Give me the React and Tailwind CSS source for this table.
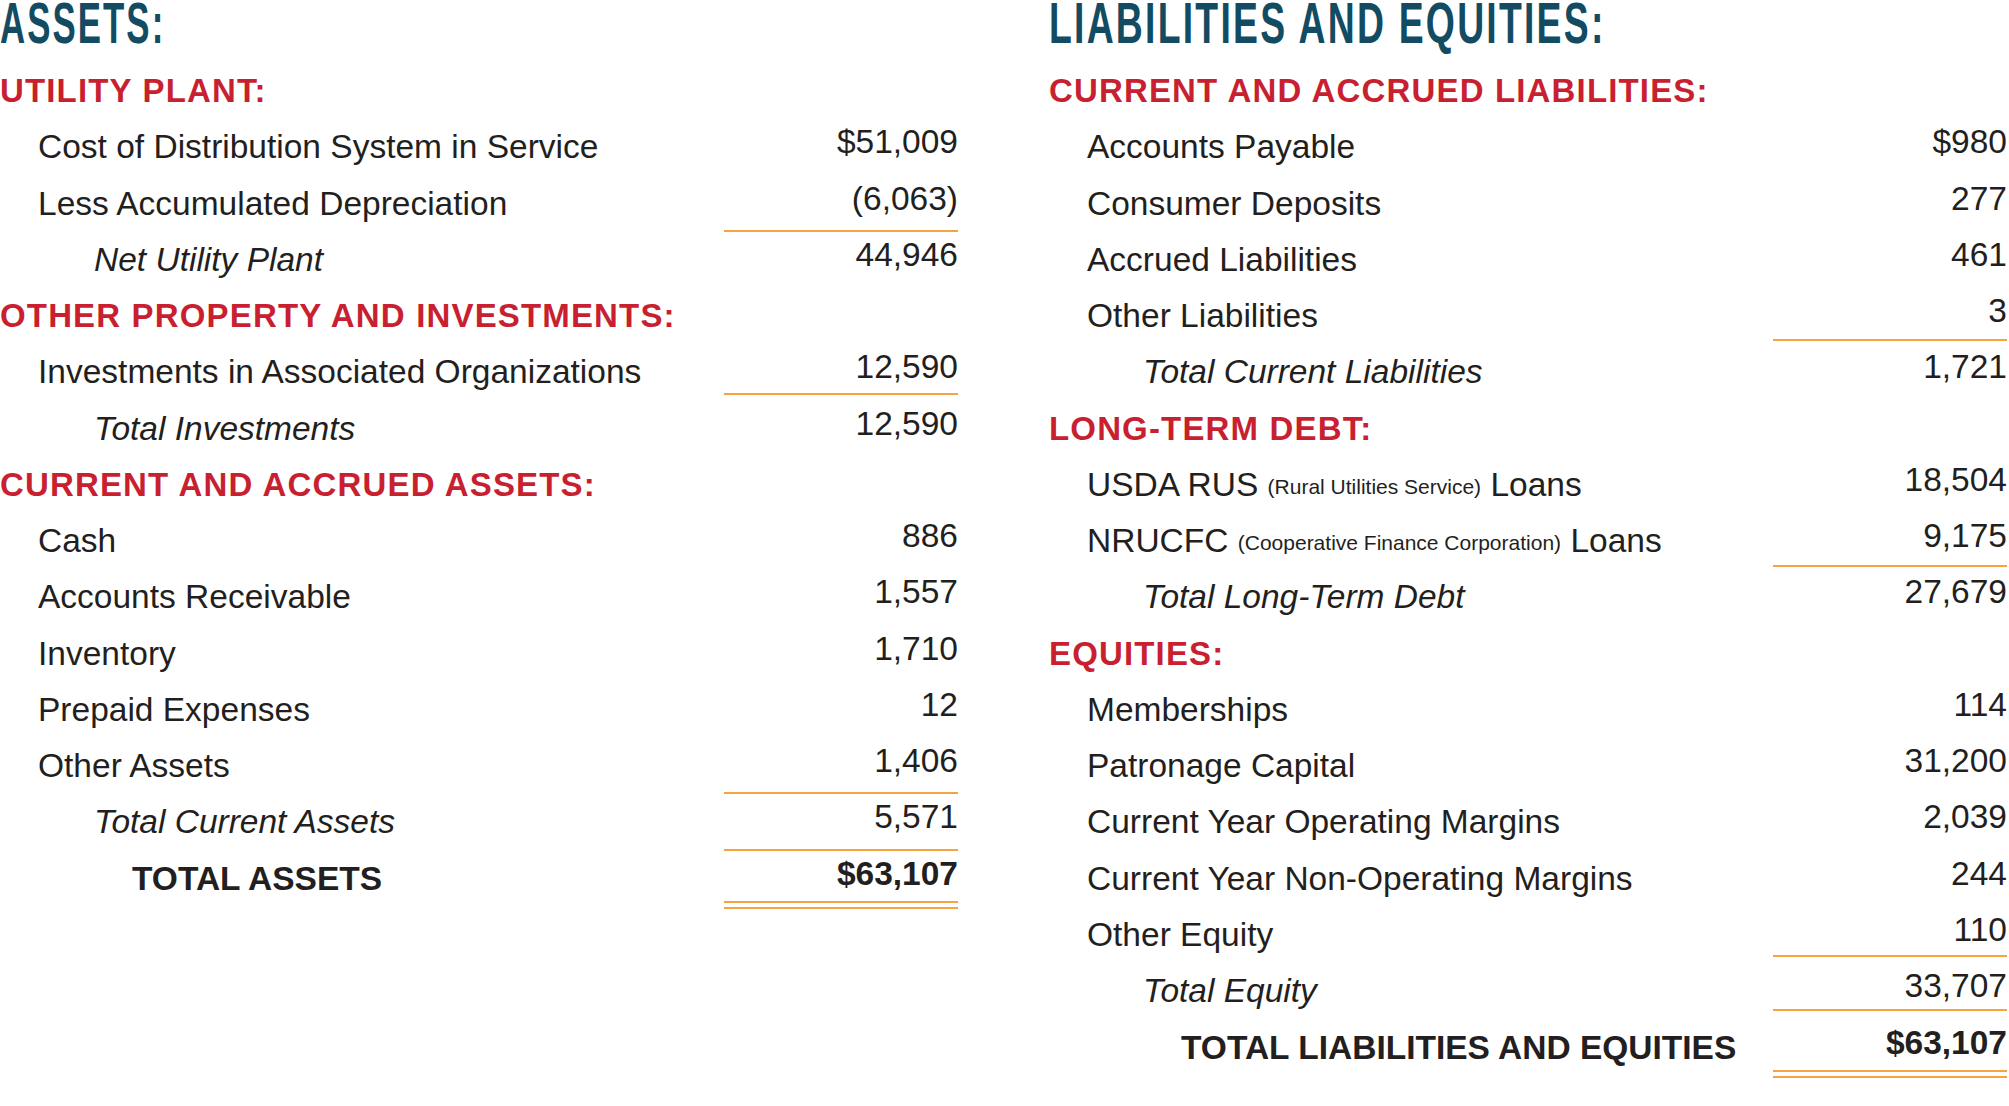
import React from "react";

const LEFT = [
  { t: "h", text: "UTILITY PLANT:" },
  { label: "Cost of Distribution System in Service", value: "$51,009" },
  { label: "Less Accumulated Depreciation", value: "(6,063)", line: "h-[56.27px] border-b-2" },
  { label: "Net Utility Plant", value: "44,946", k: "sub" },
  { t: "h", text: "OTHER PROPERTY AND INVESTMENTS:" },
  { label: "Investments in Associated Organizations", value: "12,590", line: "h-[51px] border-b-2" },
  { label: "Total Investments", value: "12,590", k: "sub" },
  { t: "h", text: "CURRENT AND ACCRUED ASSETS:" },
  { label: "Cash", value: "886" },
  { label: "Accounts Receivable", value: "1,557" },
  { label: "Inventory", value: "1,710" },
  { label: "Prepaid Expenses", value: "12" },
  { label: "Other Assets", value: "1,406", line: "h-[56.27px] border-b-2" },
  { label: "Total Current Assets", value: "5,571", k: "sub", line: "h-[56.27px] border-b-2" },
  { label: "TOTAL ASSETS", value: "$63,107", k: "total", dbl: true },
];

const RIGHT = [
  { t: "h", text: "CURRENT AND ACCRUED LIABILITIES:" },
  { label: "Accounts Payable", value: "$980" },
  { label: "Consumer Deposits", value: "277" },
  { label: "Accrued Liabilities", value: "461" },
  { label: "Other Liabilities", value: "3", line: "h-[53px] border-b-2" },
  { label: "Total Current Liabilities", value: "1,721", k: "sub" },
  { t: "h", text: "LONG-TERM DEBT:" },
  { label: "USDA RUS", small: "(Rural Utilities Service)", after: "Loans", value: "18,504" },
  { label: "NRUCFC", small: "(Cooperative Finance Corporation)", after: "Loans", value: "9,175", line: "h-[54px] border-b-2" },
  { label: "Total Long-Term Debt", value: "27,679", k: "sub" },
  { t: "h", text: "EQUITIES:" },
  { label: "Memberships", value: "114" },
  { label: "Patronage Capital", value: "31,200" },
  { label: "Current Year Operating Margins", value: "2,039" },
  { label: "Current Year Non-Operating Margins", value: "244" },
  { label: "Other Equity", value: "110", line: "h-[50px] border-b-2" },
  { label: "Total Equity", value: "33,707", k: "sub", line: "h-[48px] border-b-2" },
  { label: "TOTAL LIABILITIES AND EQUITIES", value: "$63,107", k: "total", dbl: true },
];

function Row({ r }) {
  if (r.t === "h") {
    return (
      <div className="h-[56.27px] text-[33px] leading-[56.27px] font-bold tracking-[0.035em] text-[#c81f31] whitespace-nowrap">
        {r.text}
      </div>
    );
  }
  let labelCls = "pl-[38px]";
  if (r.k === "sub") labelCls = "pl-[94px] italic";
  if (r.k === "total") labelCls = "pl-[132px] font-bold";
  const valCls = r.k === "total" ? "font-bold" : "";
  return (
    <div className="flex h-[56.27px] items-start">
      <div className={`flex-1 text-[33.5px] leading-[56.27px] whitespace-nowrap ${labelCls}`}>
        {r.label}
        {r.small && (
          <>
            {" "}
            <span className="relative -top-[2px] text-[21px]">{r.small}</span> {r.after}
          </>
        )}
      </div>
      {r.dbl ? (
        <div className="flex h-[58px] w-[234px] shrink-0 flex-col">
          <div className={`text-right text-[33.5px] leading-[46px] ${valCls}`}>{r.value}</div>
          <div className="mt-auto h-[2px] bg-[#f7a440]" />
          <div className="mt-[4px] h-[2px] bg-[#f7a440]" />
        </div>
      ) : (
        <div
          className={`w-[234px] shrink-0 border-[#f7a440] text-right text-[33.5px] leading-[46px] ${r.line || ""} ${valCls}`}
        >
          {r.value}
        </div>
      )}
    </div>
  );
}

function Column({ title, titleScale, rows }) {
  return (
    <div className="w-[958px] shrink-0">
      <div className="h-[63px]">
        <span
          className={`inline-block origin-left text-[57px] leading-[47px] font-bold tracking-[0.06em] text-[#134b63] whitespace-nowrap ${titleScale}`}
        >
          {title}
        </span>
      </div>
      {rows.map((r, i) => (
        <Row key={i} r={r} />
      ))}
    </div>
  );
}

export default function App() {
  return (
    <div className="flex h-[1106px] w-[2009px] gap-[91px] overflow-hidden bg-white font-['Liberation_Sans',Arial,sans-serif] text-[#231f20]">
      <Column title="ASSETS:" titleScale="scale-x-[0.61]" rows={LEFT} />
      <Column title="LIABILITIES AND EQUITIES:" titleScale="scale-x-[0.655]" rows={RIGHT} />
    </div>
  );
}
